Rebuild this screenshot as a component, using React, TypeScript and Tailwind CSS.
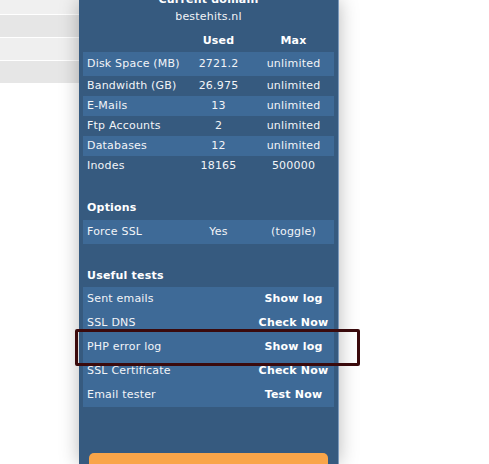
const usage = [
  { label: "Disk Space (MB)", used: "2721.2", max: "unlimited", light: true },
  { label: "Bandwidth (GB)", used: "26.975", max: "unlimited", light: false },
  { label: "E-Mails", used: "13", max: "unlimited", light: true },
  { label: "Ftp Accounts", used: "2", max: "unlimited", light: false },
  { label: "Databases", used: "12", max: "unlimited", light: true },
  { label: "Inodes", used: "18165", max: "500000", light: false },
];

const tests = [
  { label: "Sent emails", action: "Show log" },
  { label: "SSL DNS", action: "Check Now" },
  { label: "PHP error log", action: "Show log" },
  { label: "SSL Certificate", action: "Check Now" },
  { label: "Email tester", action: "Test Now" },
];

export default function App() {
  return (
    <div
      className="relative h-[464px] w-[489px] overflow-hidden bg-white text-[11px] tracking-[0.2px] text-[#f2f4f7]"
      style={{ fontFamily: '"DejaVu Sans", Verdana, sans-serif' }}
    >
      <div className="flex items-start">
        {/* Sidebar menu behind */}
        <div className="flex w-[79px] shrink-0 flex-col gap-px">
          <div className="h-[14px] bg-[#f0f0f0]" />
          <div className="h-[22px] bg-[#e6e6e6]" />
          <div className="h-[22px] bg-[#efefef]" />
          <div className="h-[22px] bg-[#e6e6e6]" />
        </div>

        {/* Domain panel */}
        <div className="relative z-10 h-[464px] w-[260px] shrink-0 border-r border-[#7b98ba] bg-[#365a7f] px-[4px] shadow-[0_0_18px_rgba(0,0,0,0.28)]">
          <div className="-mt-[7px] text-center font-bold leading-[14px] text-white">
            Current domain
          </div>
          <div className="mt-[3px] text-center leading-[14px]">bestehits.nl</div>

          {/* Usage table */}
          <div className="mt-[8px] grid h-[18px] grid-cols-[101px_69px_1fr] items-center font-bold text-white">
            <span />
            <span className="text-center">Used</span>
            <span className="text-center">Max</span>
          </div>
          <div className="mt-[2px]">
            {usage.map((row, i) => (
              <div
                key={row.label}
                className={`grid grid-cols-[101px_69px_1fr] items-center ${
                  i === 0 ? "h-[24px]" : "h-[20px]"
                } ${row.light ? "bg-[#3e6a97]" : ""}`}
              >
                <span className="pl-[4px]">{row.label}</span>
                <span className="text-center">{row.used}</span>
                <span className="text-center">{row.max}</span>
              </div>
            ))}
          </div>

          {/* Options */}
          <div className="mt-[25px] pl-[4px] font-bold leading-[14px] text-white">
            Options
          </div>
          <div className="mt-[5px] grid h-[24px] grid-cols-[101px_69px_1fr] items-center bg-[#3e6a97]">
            <span className="pl-[4px]">Force SSL</span>
            <span className="text-center">Yes</span>
            <span className="text-center">(toggle)</span>
          </div>

          {/* Useful tests */}
          <div className="mt-[25px] pl-[4px] font-bold leading-[14px] text-white">
            Useful tests
          </div>
          <div className="mt-[4px] bg-[#3e6a97]">
            {tests.map((t) => (
              <div
                key={t.label}
                className="grid h-[24px] grid-cols-[170px_1fr] items-center"
              >
                <span className="pl-[4px]">{t.label}</span>
                <span className="text-center font-bold text-white">{t.action}</span>
              </div>
            ))}
          </div>

          <div className="mx-[6px] mt-[46px] h-[36px] rounded-[5px] bg-[#f9a549]" />
        </div>
      </div>

      {/* Highlight frame */}
      <div className="absolute left-[75px] top-[329px] z-20 h-[37px] w-[285px] rounded-[2px] border-[3px] border-[#3a0a0c]" />
    </div>
  );
}
